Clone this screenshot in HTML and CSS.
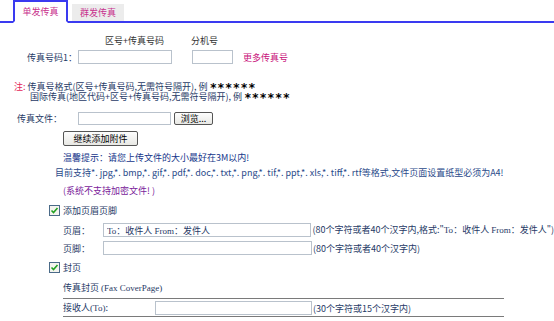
FILE: index.html
```html
<!DOCTYPE html>
<html lang="zh-CN">
<head>
  <meta charset="UTF-8" />
  <title>单发传真</title>
  <link rel="stylesheet" href="styles.css">
</head>
<body>
  <div class="tabs">
    <span class="tab active">单发传真</span>
    <span class="tab">群发传真</span>
  </div>

  <div class="phone-head">
    <span class="col-num">区号+传真号码</span>
    <span class="col-ext">分机号</span>
  </div>
  <div class="phone-row">
    <label class="phone-label">传真号码1：</label>
    <input type="text" class="txt num">
    <input type="text" class="txt ext">
    <a class="more">更多传真号</a>
  </div>

  <div class="note">
    <div><span class="note-mark">注:</span>传真号格式(区号+传真号码,无需符号隔开), 例 <span class="stars">******</span></div>
    <div class="note-indent">国际传真(地区代码+区号+传真号码,无需符号隔开), 例 <span class="stars">******</span></div>
  </div>

  <div class="file-row">
    <label class="file-label">传真文件：</label>
    <input type="text" class="txt file">
    <button class="btn browse">浏览...</button>
  </div>
  <div class="add-row">
    <button class="btn add">继续添加附件</button>
  </div>
  <p class="tip">温馨提示：请您上传文件的大小最好在3M以内!</p>
  <p class="support">目前支持*. jpg,*. bmp,*. gif,*. pdf,*. doc,*. txt,*. png,*. tif,*. ppt,*. xls,*. tiff,*. rtf等格式,文件页面设置纸型必须为A4!</p>
  <p class="encrypt">(系统不支持加密文件! )</p>

  <div class="check-row">
    <span class="check"><svg width="11" height="11" viewBox="0 0 11 11"><rect x="0.5" y="0.5" width="10" height="10" fill="#f4f4ee" stroke="#4a6a88"/><path d="M2.5 5.5 L4.5 7.5 L8.5 3" fill="none" stroke="#21a121" stroke-width="1.6"/></svg></span>
    <span>添加页眉页脚</span>
  </div>
  <div class="sub">
    <div class="field">
      <label class="field-label">页眉：</label>
      <input type="text" class="txt wide mono" value="To：收件人 From：发件人">
      <span class="hint">(80个字符或者40个汉字内,格式:"<span class="mono">To</span>：收件人 <span class="mono">From</span>：发件人")</span>
    </div>
    <div class="field">
      <label class="field-label">页脚：</label>
      <input type="text" class="txt wide">
      <span class="hint">(80个字符或者40个汉字内)</span>
    </div>
  </div>

  <div class="check-row cover-check">
    <span class="check"><svg width="11" height="11" viewBox="0 0 11 11"><rect x="0.5" y="0.5" width="10" height="10" fill="#f4f4ee" stroke="#4a6a88"/><path d="M2.5 5.5 L4.5 7.5 L8.5 3" fill="none" stroke="#21a121" stroke-width="1.6"/></svg></span>
    <span>封页</span>
  </div>
  <div class="sub cover">
    <div class="cover-title">传真封页 <span class="mono">(Fax CoverPage)</span></div>
    <div class="field ruled">
      <label class="field-label long">接收人<span class="mono">(To)</span>:</label>
      <input type="text" class="txt mid">
      <span class="hint">(30个字符或15个汉字内)</span>
    </div>
  </div>
</body>
</html>
```

FILE: styles.css
```css
body {
  font-family: "Noto Sans CJK SC", "Noto Sans", sans-serif;
  font-size: 9px;
  color: #1f3a66;
  margin: 0;
  background: #fff;
  line-height: 11px;
}

p {
  margin: 0;
}

.mono {
  font-family: "Liberation Serif", "Noto Sans CJK SC", serif;
}

/* tabs */
.tabs {
  display: flex;
  align-items: flex-end;
  height: 21px;
  padding-left: 13px;
  border-bottom: 2px solid #3a3af0;
}

.tab {
  display: block;
  width: 52px;
  height: 17px;
  line-height: 17px;
  margin-left: 4px;
  margin-bottom: -2px;
  text-align: center;
  color: #c8308c;
  background: #ececec;
  border-bottom: 2px solid #3a3af0;
}

.tab.active {
  width: 51px;
  height: 19px;
  line-height: 20px;
  margin-left: 0;
  margin-bottom: -2px;
  background: #fff;
  border: 2px solid #3a3af0;
  border-bottom: 2px solid #fff;
}

/* phone number */
.phone-head {
  display: flex;
  margin-top: 12px;
  padding-left: 105px;
  color: #333;
}

.col-ext {
  margin-left: 27px;
}

.phone-row {
  display: flex;
  align-items: center;
  margin-top: 4px;
}

.phone-label {
  width: 78px;
  padding-left: 27px;
  box-sizing: border-box;
}

.txt {
  height: 14px;
  box-sizing: border-box;
  border: 1px solid #b9c2cc;
  padding: 0 3px;
  font-size: 9px;
  color: #1f3a66;
  background: #fff;
  margin: 0;
}

.txt.num {
  width: 94px;
}

.txt.ext {
  width: 41px;
  margin-left: 20px;
}

.more {
  margin-left: 10px;
  color: #c8107a;
}

/* note */
.note {
  margin-top: 18px;
  padding-left: 14px;
  line-height: 10px;
}

.note div {
  height: 10px;
  white-space: nowrap;
}

.note-mark {
  color: #e4285a;
  margin-right: 2px;
}

.note-indent {
  padding-left: 16px;
}

.stars {
  display: inline-block;
  height: 10px;
  font-family: "DejaVu Sans Mono", monospace;
  font-weight: bold;
  font-size: 12px;
  line-height: 12px;
  letter-spacing: 0.5px;
  color: #000;
  vertical-align: top;
}

/* file */
.file-row {
  display: flex;
  align-items: center;
  margin-top: 10px;
}

.file-label {
  width: 78px;
  padding-left: 17px;
  box-sizing: border-box;
}

.txt.file {
  width: 93px;
  height: 13px;
}

.btn {
  font-family: inherit;
  font-size: 9px;
  color: #000;
  background: linear-gradient(#fdfdfd, #e8e8e4);
  border: 1px solid #555;
  border-radius: 2px;
  padding: 0;
  margin: 0;
}

.btn.browse {
  width: 39px;
  height: 13px;
  line-height: 10px;
  margin-left: 3px;
}

.add-row {
  margin-top: 6px;
  padding-left: 63px;
  display: flex;
}

.btn.add {
  width: 75px;
  height: 15px;
}

.tip {
  margin-top: 6px;
  padding-left: 63px;
  color: #14358a;
}

.support {
  margin-top: 4px;
  padding-left: 55px;
  color: #2a4a8a;
  white-space: nowrap;
}

.encrypt {
  margin-top: 7px;
  padding-left: 63px;
  color: #7a1a9a;
}

/* header / footer */
.check-row {
  display: flex;
  align-items: center;
  margin-top: 9px;
  padding-left: 49px;
  color: #1f3a66;
}

.check {
  display: flex;
  width: 14px;
}

.sub {
  padding-left: 63px;
}

.field {
  display: flex;
  align-items: center;
  margin-top: 7px;
  white-space: nowrap;
}

.field + .field {
  margin-top: 4px;
}

.field-label {
  width: 40px;
}

.field-label.long {
  width: 92px;
}

.txt.wide {
  width: 209px;
  height: 14px;
}

.txt.mid {
  width: 157px;
  height: 14px;
}

.hint {
  margin-left: 1px;
  color: #1f3a66;
}

.cover-check {
  margin-top: 7px;
}

.cover-title {
  margin-top: 9px;
}

.cover {
  width: 441px;
}

.field.ruled {
  margin-top: 4px;
  padding: 2px 0 1px;
  border-top: 1px solid #7a7a7a;
  border-bottom: 1px solid #7a7a7a;
}
```
